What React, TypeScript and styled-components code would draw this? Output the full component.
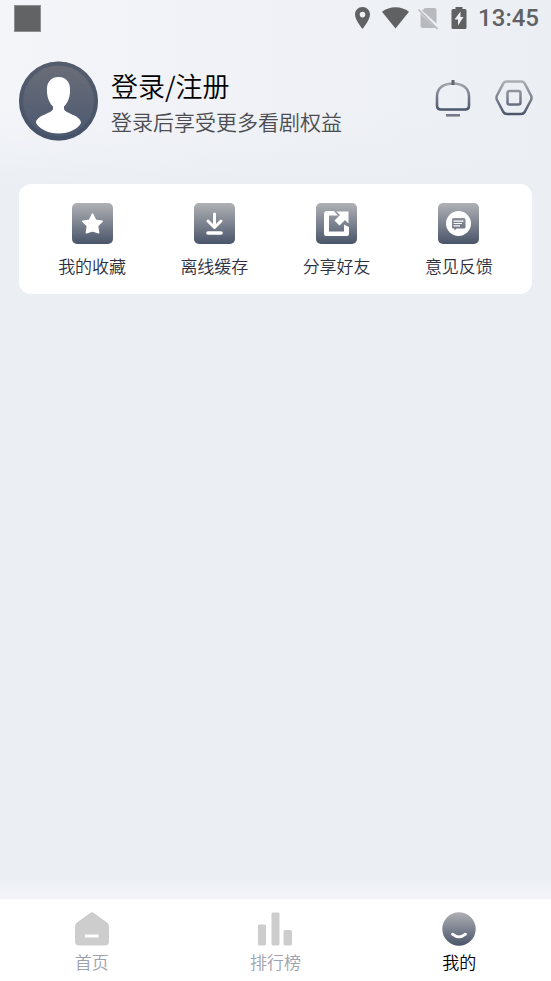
import React, { useId } from 'react';
import styled, { createGlobalStyle } from 'styled-components';

const GlobalStyle = createGlobalStyle`
  *, *::before, *::after { box-sizing: border-box; }
  body {
    margin: 0;
    background: #ebeff4;
    font-family: "Noto Sans CJK SC", sans-serif;
    font-weight: 350;
  }
  button { font: inherit; color: inherit; border: 0; padding: 0; background: none; cursor: pointer; }
  svg { display: block; flex-shrink: 0; }
`;

const Page = styled.div`
  min-height: 100vh;
  display: flex;
  flex-direction: column;
  background:
    linear-gradient(to bottom, rgba(235, 239, 244, 0) 110px, #ebeff4 184px),
    linear-gradient(to right, #f4f5f9, #eff1f6 55%, #ebeff4);
`;

const StatusBar = styled.div`
  height: 38px;
  padding: 0 12px 2px 14px;
  display: flex;
  align-items: center;
  justify-content: space-between;
  color: #5f6163;
`;

const AppMark = styled.span`
  width: 27px;
  height: 27px;
  background: #616365;
  border: 1px solid #8c8e90;
`;

const StatusIcons = styled.div`
  display: flex;
  align-items: center;
`;

const Clock = styled.time`
  margin-left: 9px;
  font-family: Roboto, sans-serif;
  font-size: 24px;
  line-height: 38px;
  font-weight: 500;
`;

const Header = styled.header`
  display: flex;
  align-items: center;
  padding: 23px 18px 0 18px;
`;

const LoginButton = styled.button`
  flex: 1;
  display: flex;
  align-items: center;
  gap: 12px;
  text-align: left;
`;

const Intro = styled.span`
  display: flex;
  flex-direction: column;
  padding-top: 4px;
`;

const Title = styled.span`
  font-size: 27px;
  line-height: 36px;
  color: #000;
`;

const Subtitle = styled.span`
  font-size: 21px;
  line-height: 34px;
  color: #4c4d50;
`;

const HeaderActions = styled.div`
  display: flex;
  gap: 23px;
  padding-bottom: 6px;
`;

const Shortcuts = styled.section`
  margin: 43px 19px 0;
  padding: 19px 12px 15px;
  display: grid;
  grid-template-columns: repeat(4, 1fr);
  background: #fff;
  border-radius: 12px;
`;

const Shortcut = styled.button`
  display: flex;
  flex-direction: column;
  align-items: center;
  gap: 9px;
  font-size: 17px;
  line-height: 26px;
  color: #2d3141;
`;

const Content = styled.main`
  flex: 1;
`;

const NavBar = styled.nav`
  position: sticky;
  bottom: 0;
  display: grid;
  grid-template-columns: repeat(3, 1fr);
  padding: 13px 0 6px;
  background: #fff;
  border-top: 1px solid #f3f3f5;
`;

const NavFade = styled.div`
  height: 20px;
  background: linear-gradient(to bottom, #ebeff4, #f3f4f8);
`;

const NavItem = styled.button<{ $active?: boolean }>`
  display: flex;
  flex-direction: column;
  align-items: center;
  gap: 3px;
  font-size: 17px;
  line-height: 26px;
  color: ${({ $active }) => ($active ? '#000' : '#9ca2b0')};
`;

function Shade({ id, y1, y2 }: { id: string; y1: number; y2: number }) {
  return (
    <defs>
      <linearGradient id={id} gradientUnits="userSpaceOnUse" x1="0" x2="0" y1={y1} y2={y2}>
        <stop offset="0" stopColor="#b0b1b5" />
        <stop offset="1" stopColor="#4a556a" />
      </linearGradient>
    </defs>
  );
}

function PhoneStatus() {
  return (
    <svg width="116" height="26" viewBox="0 0 116 26" fill="currentColor" aria-hidden="true">
      <path fillRule="evenodd" d="M9.500 2C5.300 2 2 5.300 2 9.500C2 15 9.500 24 9.500 24S17 15 17 9.500C17 5.300 13.700 2 9.500 2ZM9.500 6.800A2.800 2.800 0 1 1 9.500 12.400A2.800 2.800 0 0 1 9.500 6.800Z" />
      <path d="M29 6.800C36.500 .8 48.500 .8 56 6.800L42.500 23.500Z" />
      <path fill="#b9babe" d="M72 3H81.500Q83.500 3 83.500 5V18.500L69 5.500ZM67.500 8.500L82.500 23H69.500Q67.500 23 67.500 21Z" />
      <path stroke="#b9babe" strokeWidth="1.700" d="M65.500 4.500L84.500 24" />
      <path fillRule="evenodd" d="M102.500 2H109.500V4H112Q113.500 4 113.500 5.500V22.500Q113.500 24 112 24H100Q98.500 24 98.500 22.500V5.500Q98.500 4 100 4H102.500ZM107.500 6.500L101.500 14.500H105V20.500L110.500 12H107.500Z" />
    </svg>
  );
}

function Avatar() {
  const id = useId();
  return (
    <svg width="81" height="80" viewBox="0 0 81 80" aria-hidden="true">
      <defs>
        <linearGradient id={id} x1="0" x2="0" y1="0" y2="1">
          <stop offset="0" stopColor="#6b6e78" />
          <stop offset="1" stopColor="#4b5870" />
        </linearGradient>
      </defs>
      <circle cx="40.500" cy="40" r="39.500" fill={`url(#${id})`} />
      <circle cx="40.500" cy="40" r="37.500" fill="none" stroke="#3f4c61" strokeOpacity=".5" strokeWidth="4" />
      <path fill="#fff" d="M40.500 16C32.500 16 28.500 22 29 29C28.700 35 31 42 35 45.500V48C33.500 53 18 54 18 62C21 67.500 30 72.500 40.500 72.500S60.500 67.500 63 62C63 54 47.500 53 46 48V45.500C50 42 52.300 35 52 29C52.500 22 48.500 16 40.500 16Z" />
    </svg>
  );
}

function BellIcon() {
  const id = useId();
  return (
    <svg width="38" height="40" viewBox="0 0 38 40" fill="none" aria-hidden="true">
      <Shade id={id} y1={1} y2={32} />
      <path stroke={`url(#${id})`} strokeWidth="2.600" d="M3 18.500C3 10 9.500 5.500 19 5.500S35 10 35 18.500V27.500Q35 31.500 31 31.500H7Q3 31.500 3 27.500Z" />
      <path stroke="#5d6472" strokeWidth="3" d="M19 2V7" />
      <path stroke="#747a89" strokeWidth="2.600" d="M12 37.300H26" />
    </svg>
  );
}

function HexIcon() {
  const id = useId();
  return (
    <svg width="38" height="40" viewBox="0 0 38 40" fill="none" strokeLinejoin="round" aria-hidden="true">
      <Shade id={id} y1={2} y2={37} />
      <g stroke={`url(#${id})`} strokeWidth="2.500">
        <path d="M12 3.500H26Q28.500 3.500 29.700 5.400L36 17.500Q37 19.700 36 22L29.700 34Q28.500 36 26 36H12Q9.500 36 8.300 34L2 22Q1 19.700 2 17.500L8.300 5.400Q9.500 3.500 12 3.500Z" />
        <rect x="12.500" y="13" width="13" height="13.500" rx="2" />
      </g>
    </svg>
  );
}

function Tile({ children }: { children: (fill: string) => React.ReactNode }) {
  const id = useId();
  return (
    <svg width="41" height="41" viewBox="0 0 41 41" fill="none" aria-hidden="true">
      <Shade id={id} y1={0} y2={41} />
      <rect width="41" height="41" rx="5" fill={`url(#${id})`} />
      {children(`url(#${id})`)}
    </svg>
  );
}

const StarIcon = () => (
  <Tile>
    {() => (
      <path fill="#fff" stroke="#fff" strokeWidth="1.600" strokeLinejoin="round" d="M20.500 11L23.500 17.200L30.200 18.200L25.500 23L26.600 29.800L20.500 27.800L14.400 29.800L15.500 23L10.800 18.200L17.500 17.200Z" />
    )}
  </Tile>
);

const DownloadIcon = () => (
  <Tile>
    {() => (
      <g stroke="#fff" strokeWidth="3" strokeLinecap="round" strokeLinejoin="round">
        <path d="M20.500 11V24M14 18L20.500 24.500L27 18" />
        <path strokeWidth="3.600" d="M14 30H27" />
      </g>
    )}
  </Tile>
);

const ShareIcon = () => (
  <Tile>
    {(fill) => (
      <>
        <path fill="#fff" fillRule="evenodd" d="M11 8H18L22 12.500H13V28.500H28V21.500L33 24V31Q33 33 31 33H10Q8 33 8 31V11Q8 8 11 8Z" />
        <path fill={fill} d="M17.500 18.500L22.500 13L18.500 8H23L35 18V25.500L29 19.500L24.500 24Z" />
        <path fill="#fff" d="M20.500 8.500H32.500V20.500L29 17L23.500 22.500L18.500 17.500L24 12Z" />
      </>
    )}
  </Tile>
);

const FeedbackIcon = () => (
  <Tile>
    {(fill) => (
      <>
        <circle cx="20.500" cy="20.500" r="12.500" fill="#fff" />
        <path fill={fill} d="M15.500 15H26Q27.500 15 27.500 16.500V24Q27.500 25.500 26 25.500H18.500L16.500 27.500V25.500H15.500Q14 25.500 14 24V16.500Q14 15 15.500 15Z" />
        <path stroke="#fff" strokeWidth="1.200" d="M15.500 18.200H25.500M15.500 20.500H24M15.500 22.800H22" />
      </>
    )}
  </Tile>
);

const HomeIcon = () => (
  <svg width="34" height="34" viewBox="0 0 34 34" aria-hidden="true">
    <path fill="#cdcdcd" d="M14.800 1.200Q17 -.5 19.200 1.200L32 10.500Q34 12 34 14.500V29Q34 33.500 29.500 33.500H4.500Q0 33.500 0 29V14.500Q0 12 2 10.500Z" />
    <path fill="#fff" d="M10 22.500H23.500V25.500H10Z" />
  </svg>
);

const RankIcon = () => (
  <svg width="34" height="34" viewBox="0 0 34 34" fill="#cdcdcd" aria-hidden="true">
    <rect y="12.500" width="8" height="21" rx="1.500" />
    <rect x="13.500" y=".5" width="8" height="33" rx="1.500" />
    <rect x="25.500" y="18" width="8.500" height="15.500" rx="1.500" />
  </svg>
);

function MineIcon() {
  const id = useId();
  return (
    <svg width="34" height="34" viewBox="0 0 34 34" fill="none" aria-hidden="true">
      <Shade id={id} y1={0} y2={34} />
      <circle cx="17" cy="17" r="16.700" fill={`url(#${id})`} />
      <path stroke="#fff" strokeWidth="2.800" strokeLinecap="round" d="M10.500 22.200Q17 27.500 23.500 22.200" />
    </svg>
  );
}

const shortcuts = [
  { label: '我的收藏', Icon: StarIcon },
  { label: '离线缓存', Icon: DownloadIcon },
  { label: '分享好友', Icon: ShareIcon },
  { label: '意见反馈', Icon: FeedbackIcon },
];

const tabs = [
  { label: '首页', Icon: HomeIcon },
  { label: '排行榜', Icon: RankIcon },
  { label: '我的', Icon: MineIcon, active: true },
];

export default function App() {
  return (
    <Page lang="zh-CN">
      <GlobalStyle />
      <StatusBar>
        <AppMark />
        <StatusIcons>
          <PhoneStatus />
          <Clock>13:45</Clock>
        </StatusIcons>
      </StatusBar>
      <Header>
        <LoginButton type="button">
          <Avatar />
          <Intro>
            <Title>登录/注册</Title>
            <Subtitle>登录后享受更多看剧权益</Subtitle>
          </Intro>
        </LoginButton>
        <HeaderActions>
          <button type="button" aria-label="消息"><BellIcon /></button>
          <button type="button" aria-label="设置"><HexIcon /></button>
        </HeaderActions>
      </Header>
      <Content>
        <Shortcuts>
          {shortcuts.map(({ label, Icon }) => (
            <Shortcut key={label} type="button">
              <Icon />
              {label}
            </Shortcut>
          ))}
        </Shortcuts>
      </Content>
      <NavFade />
      <NavBar>
        {tabs.map(({ label, Icon, active }) => (
          <NavItem key={label} type="button" $active={active} aria-current={active ? 'page' : undefined}>
            <Icon />
            {label}
          </NavItem>
        ))}
      </NavBar>
    </Page>
  );
}
